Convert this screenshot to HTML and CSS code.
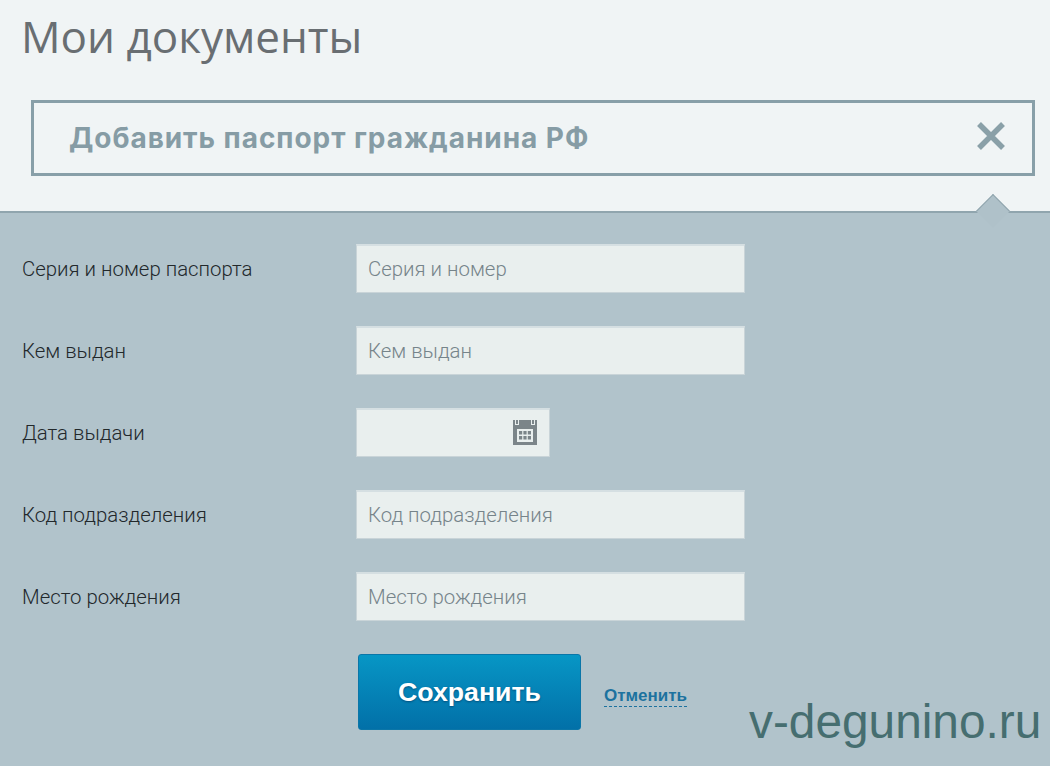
FILE: index.html
```html
<!DOCTYPE html>
<html lang="ru">
<head>
<meta charset="utf-8">
<title>Мои документы</title>
<link rel="stylesheet" href="styles.css">
</head>
<body>
<header class="top">
  <h1 class="title">Мои документы</h1>
  <div class="panel">
    <h2 class="panel-title">Добавить паспорт гражданина РФ</h2>
    <svg class="close" width="30" height="30" viewBox="0 0 30 30" aria-label="Закрыть"><path d="M3 3 27 27M27 3 3 27" fill="none" stroke="#8aa0a8" stroke-width="5.5"/></svg>
  </div>
  <div class="notch"></div>
</header>
<main class="form">
  <div class="row"><label class="label">Серия и номер паспорта</label><div class="field"><span class="ph">Серия и номер</span></div></div>
  <div class="row"><label class="label">Кем выдан</label><div class="field"><span class="ph">Кем выдан</span></div></div>
  <div class="row"><label class="label">Дата выдачи</label><div class="field short">
    <svg class="cal" width="24" height="26" viewBox="0 0 24 26">
      <path fill="#7b8589" d="M0 1h24v25H0z"/>
      <path fill="#e9efee" d="M2 0h4v6H2zM18 0h4v6h-4zM4 10h16v13H4z"/>
      <path fill="#7b8589" d="M3 1h2v4H3zM19 1h2v4h-2zM6 12h3.2v3.6H6zM10.4 12h3.2v3.6h-3.2zM14.8 12H18v3.6h-3.2zM6 17h3.2v3.6H6zM10.4 17h3.2v3.6h-3.2zM14.8 17H18v3.6h-3.2z"/>
    </svg>
  </div></div>
  <div class="row"><label class="label">Код подразделения</label><div class="field"><span class="ph">Код подразделения</span></div></div>
  <div class="row"><label class="label">Место рождения</label><div class="field"><span class="ph">Место рождения</span></div></div>
  <div class="actions">
    <button class="save">Сохранить</button>
    <a class="cancel">Отменить</a>
  </div>
  <div class="mark">v-degunino.ru</div>
</main>
</body>
</html>
```
FILE: styles.css
```css
* { box-sizing: border-box; }
html, body { margin: 0; height: 100%; }
body { width: 1050px; height: 766px; overflow: hidden; background: #b1c3cb; font-family: Roboto, "Liberation Sans", sans-serif; }
.top { position: relative; height: 213px; background: #f0f4f5; border-bottom: 2px solid #90a5ae; padding: 9px 15px 0 21px; }
.title { margin: 0; font-family: "Open Sans", sans-serif; font-weight: 400; font-size: 44px; line-height: 54px; color: #696e72; }
.panel { margin: 37px 0 0 10px; height: 76px; border: 3px solid #889fa8; display: flex; align-items: center; justify-content: space-between; padding: 0 26px 1px 35px; }
.panel-title { margin: 0; font-family: Inter, sans-serif; font-size: 28px; font-weight: 700; letter-spacing: .95px; color: #869ca5; }
.close { display: block; margin-bottom: 3px; }
.notch { position: absolute; left: 981px; top: 199px; width: 24px; height: 24px; background: #afc1c9; border-top: 1px solid #90a5ae; border-left: 1px solid #90a5ae; transform: rotate(45deg); }
.form { position: relative; padding: 31px 0 0 22px; }
.row { display: flex; align-items: center; height: 49px; margin-bottom: 33px; }
.label { width: 334px; font-size: 20.4px; font-weight: 300; color: #22282b; }
.field { width: 389px; height: 49px; background: #e9efee; border: 1px solid #c9d4d8; border-top: 2px solid #d5dfe2; display: flex; align-items: center; justify-content: space-between; padding: 0 11px; }
.short { width: 194px; justify-content: flex-end; padding-right: 12px; }
.ph { font-weight: 300; font-size: 20.4px; color: #76848a; }
.cal { display: block; margin-bottom: 3px; }
.actions { display: flex; align-items: center; margin: 0 0 0 336px; }
.save { width: 223px; height: 76px; border: 1px solid #0b76a8; border-radius: 3px; background: linear-gradient(#0796c5, #0270a8); color: #fff; font: 700 26.7px "Liberation Sans", sans-serif; text-shadow: 0 1px 2px rgba(0,50,90,.6); }
.cancel { margin: 8px 0 0 23px; font: 700 17px "Liberation Sans", sans-serif; color: #1c729f; border-bottom: 1px dashed #1c729f; line-height: 20px; }
.mark { position: absolute; left: 749px; top: 481px; font: 400 47.8px "Liberation Sans", sans-serif; color: #466e70; }
```
